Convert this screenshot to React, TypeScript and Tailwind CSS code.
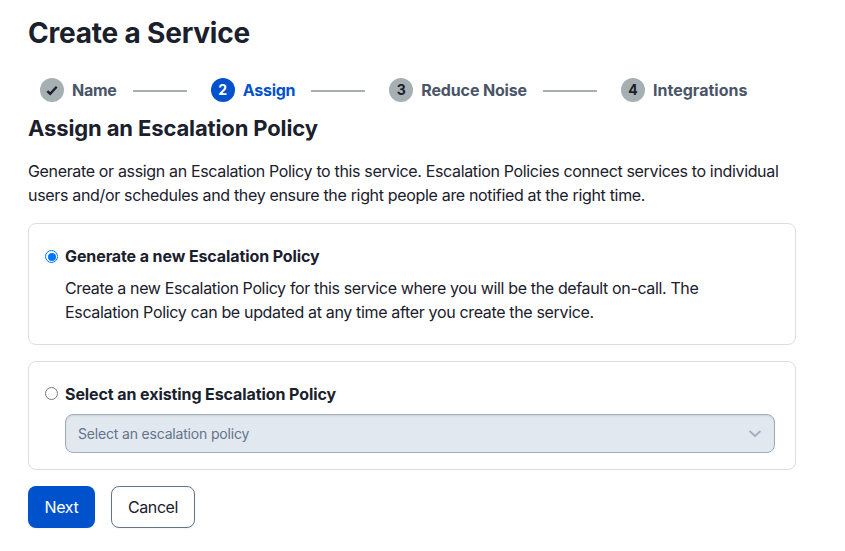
import React from "react";

type Step = { label: string; state: "done" | "active" | "next"; tracking: string };

const steps: Step[] = [
  { label: "Name", state: "done", tracking: "tracking-[-0.24px]" },
  { label: "Assign", state: "active", tracking: "tracking-[-0.24px]" },
  { label: "Reduce Noise", state: "next", tracking: "tracking-[-0.15px]" },
  { label: "Integrations", state: "next", tracking: "tracking-[0.01px]" },
];

function StepBadge({ step, index }: { step: Step; index: number }) {
  const tone = step.state === "active" ? "bg-[#0052cc] text-white" : "bg-[#a6afb2] text-[#1a202c]";
  return (
    <span className={`flex size-6 items-center justify-center rounded-full text-[14px] font-bold ${tone}`}>
      {step.state === "done" ? (
        <svg className="mt-0.5" width="14" height="14" viewBox="0 0 14 14" fill="none" stroke="currentColor" strokeWidth="2.4">
          <path d="M2.3 7.1 5.2 9.7 11.7 2.8" />
        </svg>
      ) : (
        index + 1
      )}
    </span>
  );
}

function Radio({ checked }: { checked?: boolean }) {
  return (
    <span className={`flex size-[13px] shrink-0 items-center justify-center rounded-full border bg-white ${checked ? "mt-[6px] border-[#0075ff]" : "mt-[5px] border-[#767676]"}`}>
      {checked && <span className="size-[8px] rounded-full bg-[#0075ff]" />}
    </span>
  );
}

export default function App() {
  return (
    <main className="h-[551px] w-[845px] overflow-hidden bg-white pl-7 pt-[15px] font-[Inter,sans-serif] text-base leading-6 text-[#1a202c]">
      <h1 className="text-[28px] font-bold leading-9 tracking-[-0.2px]">Create a Service</h1>
      <ol className="mt-[27px] flex h-6 items-center pl-3">
        {steps.map((step, i) => (
          <li key={step.label} className="flex items-center">
            {i > 0 && <span className="ml-4 mr-6 mt-0.5 h-0.5 w-[54px] bg-[#a6afb2]" />}
            <StepBadge step={step} index={i} />
            <span className={`ml-2 font-bold ${step.tracking} ${step.state === "active" ? "text-[#0052cc]" : "text-[#4a5568]"}`}>{step.label}</span>
          </li>
        ))}
      </ol>
      <h2 className="mt-3 text-[22px] font-bold leading-7 tracking-[-0.13px]">Assign an Escalation Policy</h2>
      <p className="mt-[17px] whitespace-nowrap tracking-[-0.345px]">
        Generate or assign an Escalation Policy to this service. Escalation Policies connect services to individual
        <br />
        <span className="tracking-[-0.33px]">users and/or schedules and they ensure the right people are notified at the right time.</span>
      </p>
      <section className="mt-4 flex h-[122px] w-[768px] gap-[7px] rounded-lg border border-[#dcdddf] pl-4 pt-5">
        <Radio checked />
        <div className="whitespace-nowrap">
          <h3 className="font-bold tracking-[-0.1px]">Generate a new Escalation Policy</h3>
          <p className="mt-2 tracking-[-0.36px]">
            Create a new Escalation Policy for this service where you will be the default on-call. The
            <br />
            <span className="tracking-[-0.34px]">Escalation Policy can be updated at any time after you create the service.</span>
          </p>
        </div>
      </section>
      <section className="mt-4 flex h-[109px] w-[768px] gap-[7px] rounded-lg border border-[#dcdddf] pl-4 pt-5">
        <Radio />
        <div>
          <h3 className="font-bold tracking-[-0.09px]">Select an existing Escalation Policy</h3>
          <div className="mt-2 flex h-[39px] w-[710px] items-center justify-between rounded-lg border border-[#a0aec0] bg-[#e2e8f0] px-3 text-sm tracking-[-0.18px] text-[#64748b] shadow-[inset_0_1px_2px_rgba(0,0,0,0.1)]">
            Select an escalation policy
            <svg className="text-[#a0aec0]" width="14" height="14" viewBox="0 0 14 14" fill="none" stroke="currentColor" strokeWidth="1.7">
              <path d="m1.5 4 5.5 5L12.5 4" />
            </svg>
          </div>
        </div>
      </section>
      <div className="mt-4 flex gap-4">
        <button className="h-[42px] w-[67px] rounded-lg bg-[#0052cc] tracking-[-0.3px] text-white shadow-xs">Next</button>
        <button className="h-[42px] w-[84px] rounded-lg border border-[#64748b] bg-white tracking-[-0.4px] shadow-xs">Cancel</button>
      </div>
    </main>
  );
}
